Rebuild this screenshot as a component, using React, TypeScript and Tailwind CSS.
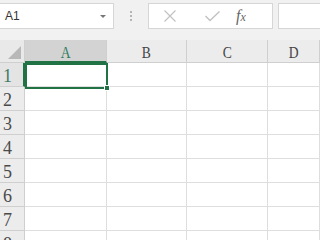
import React from "react";

const cols = ["A", "B", "C", "D"];
const rows = [1, 2, 3, 4, 5, 6, 7, 8];

export default function App() {
  return (
    <div className="h-[240px] w-[320px] overflow-hidden bg-white font-['Liberation_Sans',sans-serif]">
      {/* formula bar */}
      <div className="flex h-[40px] items-start bg-[#f1f1f1] pt-[3px]">
        <div className="flex h-[26px] w-[114px] items-center justify-between border border-l-0 border-[#d6d6d6] bg-white pl-[5px] pr-[7px]">
          <span className="text-[12px] text-[#333]">A1</span>
          <span className="h-0 w-0 border-x-[3px] border-t-[3px] border-x-transparent border-t-[#777]" />
        </div>
        <div className="flex h-[26px] w-[34px] flex-col items-center justify-center gap-[2px]">
          <span className="h-[2px] w-[2px] bg-[#b5b5b5]" />
          <span className="h-[2px] w-[2px] bg-[#b5b5b5]" />
          <span className="h-[2px] w-[2px] bg-[#b5b5b5]" />
        </div>
        <div className="flex h-[26px] w-[125px] items-center border border-[#d6d6d6] bg-white">
          <svg width="14" height="14" viewBox="0 0 14 14" className="ml-[14px]">
            <path d="M1.5 1.5 L12.5 12.5 M12.5 1.5 L1.5 12.5" stroke="#c2c2c2" strokeWidth="1.2" fill="none" />
          </svg>
          <svg width="17" height="14" viewBox="0 0 17 14" className="ml-[27px]">
            <path d="M1.5 7 L6 11.5 L15.5 2.5" stroke="#c2c2c2" strokeWidth="1.4" fill="none" />
          </svg>
          <span className="ml-[15px] font-['Liberation_Serif',serif] text-[16px] italic text-[#666]">
            f<span className="text-[12px]">x</span>
          </span>
        </div>
        <div className="ml-[5px] h-[26px] flex-1 border border-r-0 border-[#d6d6d6] bg-white" />
      </div>

      {/* grid */}
      <div className="relative grid grid-cols-[25px_82px_80px_81px_1fr] grid-rows-[23px_repeat(8,24px)] font-['Liberation_Serif',serif]">
        <div className="relative border-b border-r border-[#cfcfcf] bg-[#e9e9e9]">
          <span className="absolute bottom-[3px] right-[3px] h-0 w-0 border-b-[13px] border-l-[13px] border-b-[#b8b8b8] border-l-transparent" />
        </div>
        {cols.map((c, i) => (
          <div
            key={c}
            className={
              i === 0
                ? "flex items-center justify-center border-b-2 border-r border-b-[#217346] border-r-[#cfcfcf] bg-[#d3d3d3] pt-[4px] text-[16px] text-[#2e7d5b]"
                : "flex items-center justify-center border-b border-r border-[#cfcfcf] bg-[#ececec] pt-[4px] text-[16px] text-[#444]"
            }
          >
            <span className="inline-block scale-x-[0.85]">{c}</span>
          </div>
        ))}
        {rows.map((r) => (
          <React.Fragment key={r}>
            <div
              className={
                r === 1
                  ? "flex items-center border-b border-r-2 border-b-[#cfcfcf] border-r-[#217346] bg-[#e4e4e4] pl-[3px] pt-[3px] text-[18px] text-[#3f7a64]"
                  : "flex items-center border-b border-r border-[#cfcfcf] bg-[#ececec] pl-[3px] pt-[3px] text-[18px] text-[#4a4a4a]"
              }
            >
              {r}
            </div>
            {cols.map((c) => (
              <div key={c} className="border-b border-r border-[#dedede]" />
            ))}
          </React.Fragment>
        ))}
        {/* selection */}
        <div className="pointer-events-none absolute left-[25px] top-[23px] h-[26px] w-[83px] border-2 border-[#217346]">
          <span className="absolute -bottom-[4px] -right-[4px] h-[6px] w-[6px] border border-white bg-[#217346]" />
        </div>
      </div>
    </div>
  );
}
